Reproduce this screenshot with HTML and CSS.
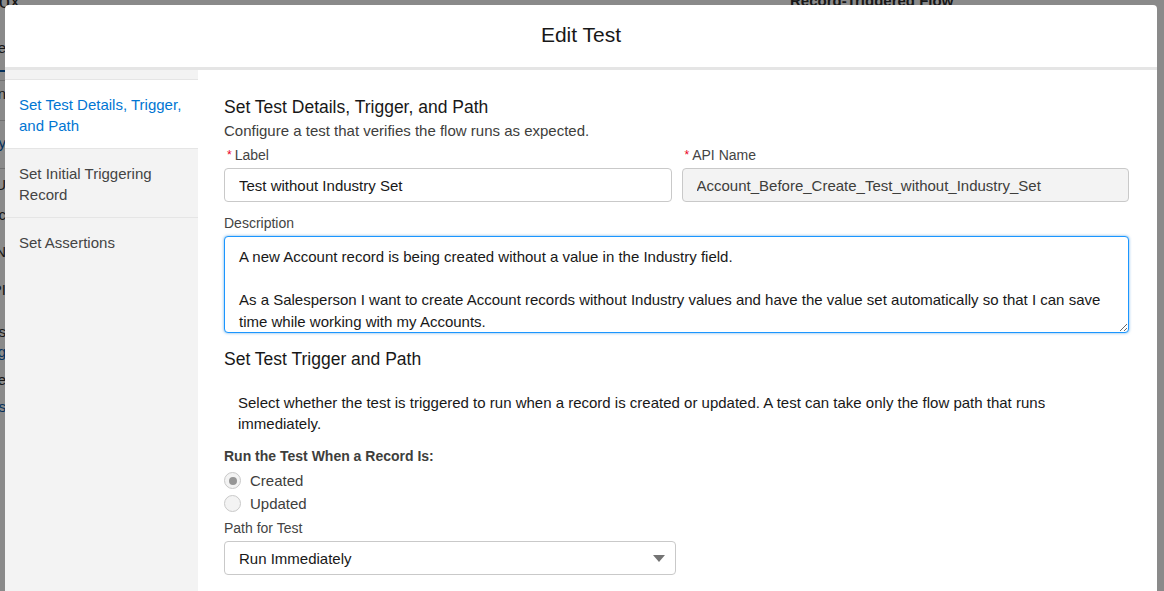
FILE: index.html
```html
<!DOCTYPE html>
<html lang="en">
<head>
    <meta charset="UTF-8">
    <meta name="viewport" content="width=device-width, initial-scale=1.0">
    <title>Edit Test</title>
    <link rel="stylesheet" href="styles.css">
</head>
<body>
    <!-- page behind the modal, only a sliver of it shows -->
    <div class="page">
        <div class="page-top">
            <span class="page-crumb">Sandbox</span>
            <span class="page-flow">Record-Triggered Flow</span>
        </div>
        <div class="page-nav">
            <div class="nav-row r1"><span>Flow Type</span></div>
            <div class="nav-row r2 tab"></div>
            <div class="nav-row r3 line"><span>Active Version</span></div>
            <div class="nav-row r4 line"><span class="link">Activity</span></div>
            <div class="nav-row r5 line"><span>Account Before Save U</span></div>
            <div class="nav-row r6"><span>Trigger Logic</span></div>
            <div class="nav-row r7"><span>Entry Conditions N</span></div>
            <div class="nav-row r8"><span>Object: API</span></div>
            <div class="nav-row r9"><span>Tests</span></div>
            <div class="nav-row r10"><span class="link">Debug Log</span></div>
            <div class="nav-row r11"><span>Trace</span></div>
            <div class="nav-row r12"><span class="link">Versions</span></div>
        </div>
    </div>

    <div class="backdrop"></div>

    <section class="modal">
        <header class="modal-header">
            <h2>Edit Test</h2>
        </header>
        <div class="modal-body">
            <nav class="steps">
                <div class="step active">Set Test Details, Trigger, and Path</div>
                <div class="step">Set Initial Triggering Record</div>
                <div class="step">Set Assertions</div>
            </nav>

            <div class="content">
                <h3 class="section-title">Set Test Details, Trigger, and Path</h3>
                <p class="section-sub">Configure a test that verifies the flow runs as expected.</p>

                <div class="field-row">
                    <div class="field">
                        <label class="field-label"><abbr class="req">*</abbr>Label</label>
                        <input class="input" type="text" value="Test without Industry Set">
                    </div>
                    <div class="field">
                        <label class="field-label"><abbr class="req">*</abbr>API Name</label>
                        <input class="input readonly" type="text" value="Account_Before_Create_Test_without_Industry_Set" readonly>
                    </div>
                </div>

                <div class="field desc">
                    <label class="field-label">Description</label>
                    <textarea class="textarea">A new Account record is being created without a value in the Industry field.

As a Salesperson I want to create Account records without Industry values and have the value set automatically so that I can save time while working with my Accounts.</textarea>
                </div>

                <h3 class="section-title second">Set Test Trigger and Path</h3>
                <p class="help">Select whether the test is triggered to run when a record is created or updated. A test can take only the flow path that runs immediately.</p>

                <div class="group-label">Run the Test When a Record Is:</div>
                <div class="radio-row">
                    <span class="radio checked"></span>
                    <span>Created</span>
                </div>
                <div class="radio-row">
                    <span class="radio"></span>
                    <span>Updated</span>
                </div>

                <label class="field-label path">Path for Test</label>
                <div class="select">
                    <span>Run Immediately</span>
                    <svg width="12" height="7" viewBox="0 0 12 7"><path d="M0 0h12L6 7z" fill="#747474"/></svg>
                </div>
            </div>
        </div>
    </section>
</body>
</html>
```

FILE: styles.css
```css
* {
    box-sizing: border-box;
}
body {
    margin: 0;
    font-family: "Liberation Sans", Arial, sans-serif;
    font-size: 15px;
    color: #181818;
    background: #ffffff;
    overflow: hidden;
}

/* background page */
.page {
    color: #2e2e2e;
}
.page-top {
    display: flex;
    height: 20px;
    margin-top: -10px;
    font-size: 20px;
    white-space: nowrap;
}
.page-crumb {
    width: 20px;
    display: flex;
    justify-content: flex-end;
}
.page-flow {
    margin-left: 770px;
    margin-top: 2px;
    font-size: 15px;
    font-weight: bold;
}
.page-nav {
    width: 6px;
    overflow: hidden;
    font-size: 15px;
    line-height: 20px;
}
.nav-row {
    display: flex;
    justify-content: flex-end;
    align-items: flex-start;
    white-space: nowrap;
}
.nav-row.line {
    border-top: 1px solid #cfcfcf;
}
.nav-row .link {
    color: #0b5cab;
}
.r1 { margin-top: 28px; height: 32px; }
.r2 { height: 10px; border-top: 2px solid #0b5cab; }
.r3 { height: 40px; padding-top: 3px; }
.r4 { height: 48px; padding-top: 12px; }
.r5 { height: 37px; padding-top: 6px; }
.r6 { height: 37px; }
.r7 { height: 38px; }
.r8 { height: 42px; }
.r9 { height: 20px; }
.r10 { height: 28px; }
.r11 { height: 27px; }
.r12 { height: 27px; }

.backdrop {
    position: fixed;
    inset: 0;
    background: rgba(0, 0, 0, 0.46);
}

/* modal */
.modal {
    position: fixed;
    top: 5px;
    left: 5px;
    width: 1152px;
    bottom: -40px;
    background: #ffffff;
    border-radius: 4px 4px 0 0;
    display: flex;
    flex-direction: column;
}
.modal-header {
    height: 65px;
    border-bottom: 3px solid #e5e5e5;
    display: flex;
    align-items: center;
    justify-content: center;
}
.modal-header h2 {
    margin: 0 0 2px;
    font-size: 21px;
    font-weight: normal;
    color: #181818;
}
.modal-body {
    flex: 1;
    display: flex;
}

.steps {
    width: 193px;
    background: #f3f3f3;
    padding-top: 9px;
}
.step {
    padding: 14px 14px 12px;
    line-height: 21px;
    color: #444444;
    border-top: 1px solid #e5e5e5;
}
.step.active {
    background: #ffffff;
    color: #0176d3;
}

.content {
    flex: 1;
    padding: 24px 28px 0 26px;
}
.section-title {
    margin: 0;
    font-size: 17.5px;
    font-weight: normal;
    line-height: 26px;
}
.section-title.second {
    margin-top: 13px;
}
.section-sub {
    margin: 0;
    line-height: 21px;
    color: #3e3e3c;
}

.field-row {
    display: grid;
    grid-template-columns: 1fr 1fr;
    gap: 10px;
    margin-top: 5px;
}
.field-label {
    display: block;
    font-size: 14px;
    line-height: 18px;
    color: #444444;
    margin-bottom: 4px;
}
.req {
    color: #ea001e;
    text-decoration: none;
    font-size: 12px;
    margin: 0 3px 0 3px;
    vertical-align: 1px;
}
.input {
    width: 100%;
    height: 34px;
    padding: 0 14px;
    border: 1px solid #c9c9c9;
    border-radius: 4px;
    font-family: inherit;
    font-size: 15px;
    color: #181818;
    background: #ffffff;
    outline: none;
}
.input.readonly {
    background: #f3f3f3;
    color: #3e3e3c;
}

.field.desc {
    margin-top: 12px;
}
.textarea {
    display: block;
    width: 100%;
    height: 97px;
    padding: 9px 14px 0;
    border: 1px solid #1b96ff;
    border-radius: 4px;
    box-shadow: 0 0 3px rgba(1, 118, 211, 0.6);
    font-family: inherit;
    font-size: 15px;
    line-height: 21.5px;
    color: #181818;
    resize: vertical;
    outline: none;
    overflow: hidden;
}

.help {
    margin: 20px 14px 0;
    line-height: 21px;
    color: #181818;
}
.group-label {
    margin-top: 13px;
    font-size: 14px;
    font-weight: bold;
    line-height: 18px;
    color: #3e3e3c;
}
.radio-row {
    display: flex;
    align-items: center;
    height: 23px;
    gap: 9px;
    color: #3e3e3c;
}
.group-label + .radio-row {
    margin-top: 4px;
}
.radio {
    width: 17px;
    height: 17px;
    border: 1px solid #c9c9c9;
    border-radius: 50%;
    background: #f3f3f3;
    display: flex;
    align-items: center;
    justify-content: center;
}
.radio.checked::after {
    content: "";
    width: 8px;
    height: 8px;
    border-radius: 50%;
    background: #969696;
}
.field-label.path {
    margin-top: 4px;
}
.select {
    width: 452px;
    height: 34px;
    padding: 0 10px 0 14px;
    border: 1px solid #c9c9c9;
    border-radius: 4px;
    display: flex;
    align-items: center;
    justify-content: space-between;
    color: #181818;
}
```
